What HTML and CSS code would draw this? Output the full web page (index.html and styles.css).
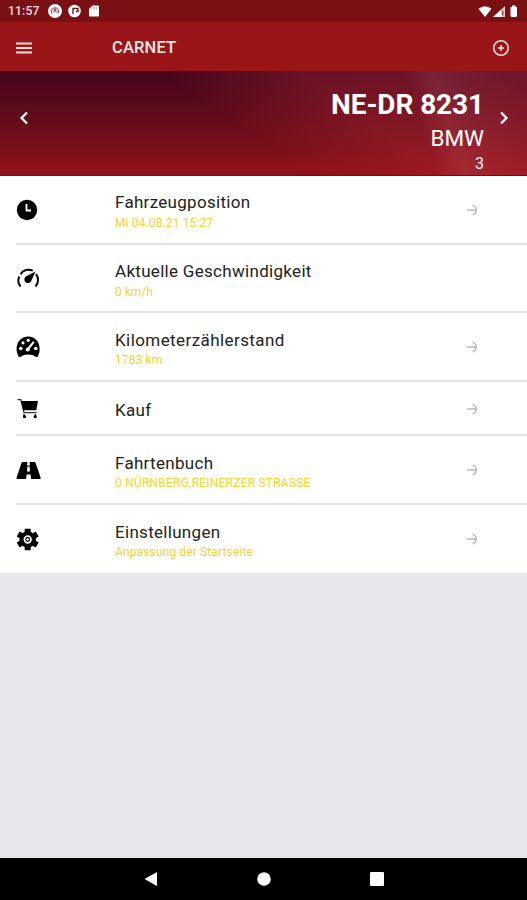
FILE: index.html
```html
<!DOCTYPE html>
<html lang="de">
<head>
<meta charset="utf-8">
<meta name="viewport" content="width=device-width">
<title>CARNET</title>
<link rel="stylesheet" href="styles.css">
</head>
<body>
<div class="status">
  <span class="time">11:57</span>
  <svg class="notices" width="54" height="16" viewBox="0 0 54 16">
    <circle cx="7" cy="8" r="7" fill="#fff"/>
    <path d="M4.200 10.500a3.500 3.500 0 1 1 5.600 0M5.600 9.500L7 5.800 8.400 9.500" fill="none" stroke="#a04a4e" stroke-width="1.100"/>
    <circle cx="26.500" cy="8" r="6.300" fill="#fff"/>
    <path d="M25 11V5.500h5v3h-2" fill="none" stroke="#7c1014" stroke-width="1.400"/>
    <path d="M41 6l3.500-3.500H50q1 0 1 1v9q0 1-1 1h-8q-1 0-1-1z" fill="#fff"/>
    <path d="M44 4v2.500M46.300 4v2.500M48.600 4v2.500" stroke="#b06a6c" stroke-width=".7"/>
  </svg>
  <svg class="signals" width="42" height="16" viewBox="0 0 42 16">
    <path d="M.5 5.800Q7 .6 13.500 5.800L7 14z" fill="#fff"/>
    <path d="M15 14L27 3v11z" fill="#e9c9ca"/>
    <path d="M15 14l8-7v7z" fill="#fff"/>
    <path d="M24.800 7.500v5" stroke="#7c1014"/>
    <path d="M32.500 4H34V2.500h3.500V4H39v9q0 1-1 1h-4.500q-1 0-1-1z" fill="#fff"/>
  </svg>
</div>
<header class="bar">
  <svg class="menu" width="16" height="12" viewBox="0 0 16 12"><path d="M0 1.500h16M0 6h16M0 10.500h16" stroke="#fbdcda" stroke-width="2"/></svg>
  <h1>CARNET</h1>
  <svg class="add" width="18" height="18" viewBox="0 0 18 18"><g fill="none" stroke="#fbdcda" stroke-width="1.600"><circle cx="9" cy="9" r="7.300"/><path d="M9 6v6M6 9h6"/></g></svg>
</header>
<section class="banner">
  <svg class="prev" width="10" height="14" viewBox="0 0 10 14"><path d="M8 1.500L2.500 7 8 12.500" fill="none" stroke="#fff" stroke-width="2.200"/></svg>
  <div class="car">
    <strong class="plate">NE-DR 8231</strong>
    <span class="make">BMW</span>
    <span class="model">3</span>
  </div>
  <svg class="next" width="10" height="14" viewBox="0 0 10 14"><path d="M2 1.500L7.500 7 2 12.500" fill="none" stroke="#fff" stroke-width="2.200"/></svg>
</section>
<main class="list">
  <div class="row">
    <svg class="icon" viewBox="0 0 26 26"><circle cx="11" cy="13" r="10.200"/><path d="M10.500 7v6.500h4.500" fill="none" stroke="#fff" stroke-width="1.800"/></svg>
    <div class="text"><span class="title up">Fahrzeugposition</span><span class="sub">Mi 04.08.21 15:27</span></div>
    <svg class="go" viewBox="0 0 12 12"><path d="M1 6h9.500M6.500 1.500H7.500Q10.300 3 10.300 6T7.500 10.500H6.500"/></svg>
  </div>
  <div class="row short">
    <svg class="icon" viewBox="0 0 26 26"><path d="M4.500 20.500A9.500 9.500 0 0 1 3.300 10.500M4.500 8.200A9.500 9.500 0 0 1 16.800 4.700M20 8.200A9.500 9.500 0 0 1 19.500 20.500" fill="none" stroke="#000" stroke-width="2"/><path d="M19.500 5.500l-4.200 9.300a3.600 3.600 0 1 1-5-4.500z"/></svg>
    <div class="text"><span class="title">Aktuelle Geschwindigkeit</span><span class="sub snug">0 km/h</span></div>
  </div>
  <div class="row">
    <svg class="icon" viewBox="0 0 26 26"><path d="M2.800 22.700C-2.500 14 2 2.500 12.200 2.500S26.500 14 21.600 22.700q-1 .8-2 0c-4-2.800-10.800-2.800-14.800 0q-1 .8-2 0z"/><g fill="#fff"><circle cx="4.800" cy="14.500" r="1.700"/><circle cx="7" cy="8.800" r="1.600"/><circle cx="12.200" cy="6.300" r="1.600"/><circle cx="19.800" cy="14.500" r="1.700"/><circle cx="11.700" cy="15.500" r="2.100"/></g><path d="M12 15L17.800 7.800" stroke="#fff" stroke-width="2"/></svg>
    <div class="text"><span class="title wide">Kilometerzählerstand</span><span class="sub">1783 km</span></div>
    <svg class="go" viewBox="0 0 12 12"><path d="M1 6h9.500M6.500 1.500H7.500Q10.300 3 10.300 6T7.500 10.500H6.500"/></svg>
  </div>
  <div class="row single">
    <svg class="icon" viewBox="0 0 26 26"><path d="M1.500 3.700h3.300l3.200 13H20.500M8 18v2M19.500 18v2" fill="none" stroke="#333" stroke-width="1.300"/><path d="M4.800 5h17.200L20.300 14.200H7.500z"/><circle cx="8.500" cy="20.700" r="1.600"/><circle cx="19.200" cy="20.700" r="1.600"/></svg>
    <div class="text"><span class="title">Kauf</span></div>
    <svg class="go" viewBox="0 0 12 12"><path d="M1 6h9.500M6.500 1.500H7.500Q10.300 3 10.300 6T7.500 10.500H6.500"/></svg>
  </div>
  <div class="row">
    <svg class="icon" viewBox="0 0 26 26"><path d="M6.800 5h4.600l-.3 3.500h2.800L13.600 5h4.600q1 0 1.400 1l5 14.500q.5 1.500-.8 1.500H15l-.4-4.500h-4l-.4 4.500H1.300Q.1 22 .6 20.500L5.500 6q.3-1 1.300-1z"/><path d="M11.400 9.500h2.200l.4 5h-3z" fill="#fff"/></svg>
    <div class="text"><span class="title">Fahrtenbuch</span><span class="sub address">0 NÜRNBERG,REINERZER STRASSE</span></div>
    <svg class="go" viewBox="0 0 12 12"><path d="M1 6h9.500M6.500 1.500H7.500Q10.300 3 10.300 6T7.500 10.500H6.500"/></svg>
  </div>
  <div class="row last">
    <svg class="icon" viewBox="0 0 26 26"><circle cx="11.700" cy="13.500" r="8.300"/><path d="M11.700 2.700v21.600M2.200 8l19 11M2.200 19l19-11" stroke="#000" stroke-width="6"/><circle cx="11.700" cy="13.500" r="3.300" fill="#000" stroke="#fff" stroke-width="1.700"/><path d="M11.700 12v3M10.200 13.500h3" stroke="#fff"/></svg>
    <div class="text"><span class="title">Einstellungen</span><span class="sub">Anpassung der Startseite</span></div>
    <svg class="go" viewBox="0 0 12 12"><path d="M1 6h9.500M6.500 1.500H7.500Q10.300 3 10.300 6T7.500 10.500H6.500"/></svg>
  </div>
</main>
<nav class="system">
  <svg width="14" height="16" viewBox="0 0 14 16"><path d="M.5 8L13 1v14z" fill="#fff"/></svg>
  <svg width="14" height="14" viewBox="0 0 14 14"><circle cx="7" cy="7" r="6.800" fill="#fff"/></svg>
  <svg width="14" height="14" viewBox="0 0 14 14"><rect width="14" height="14" rx="1" fill="#fff"/></svg>
</nav>
</body>
</html>
```
FILE: styles.css
```css
* { box-sizing: border-box; }
body {
  margin: 0;
  width: 527px;
  height: 900px;
  display: flex;
  flex-direction: column;
  overflow: hidden;
  background: #e8e7ed;
  font-family: Roboto, sans-serif;
  color: #222;
}
svg { display: block; flex: none; }
.status {
  height: 22px;
  background: #7b1014;
  display: flex;
  align-items: center;
  padding: 0 8px;
}
.time { width: 40px; font-size: 12px; line-height: 22px; font-weight: 500; color: #f6dfdf; letter-spacing: .2px; white-space: nowrap; }
.signals { margin-left: auto; margin-right: -1px; }
.bar {
  height: 49px;
  background: #9a1518;
  display: flex;
  align-items: center;
  padding: 2px 17px 0 16px;
}
.bar h1 { margin: 0 0 0 80px; font-size: 16.5px; font-weight: 500; color: #fbe6e4; letter-spacing: .15px; }
.add { margin-left: auto; }
.banner {
  height: 105px;
  display: flex;
  color: #fff;
  padding: 0 18px 0 19px;
  border-bottom: 1px solid #8a0508;
  background:
    linear-gradient(72deg, transparent 78%, rgba(255, 190, 190, .09) 83%, rgba(255, 170, 180, .05) 88%, transparent 98%),
    linear-gradient(180deg, transparent 75%, rgba(160, 20, 30, .3) 100%),
    linear-gradient(35deg, transparent 45%, rgba(200, 50, 60, .28) 66%, rgba(185, 50, 70, .36) 100%),
    linear-gradient(180deg, #43051b 0%, #5b0a19 35%, #720e19 65%, #8b1119 100%);
}
.prev, .next { margin-top: 40px; }
.car { margin-left: auto; margin-right: 15px; display: flex; flex-direction: column; align-items: flex-end; white-space: nowrap; }
.plate { margin-top: 17px; font-size: 28px; line-height: 34px; font-weight: 700; letter-spacing: -.1px; }
.make { font-size: 22.5px; line-height: 30px; margin-top: 1px; }
.model { font-size: 16px; line-height: 20px; margin-top: 1px; }
.list { background: #fff; padding-left: 16px; }
.row {
  height: 69px;
  display: flex;
  align-items: flex-start;
  border-bottom: 2px solid #e4e4e6;
}
.short { height: 68px; }
.single { height: 54px; }
.last { height: 68px; border: 0; }
.icon { width: 26px; height: 26px; margin-top: 21px; }
.single .icon { margin-top: 14px; }
.text { margin-left: 73px; padding-top: 16px; flex: 1; display: flex; flex-direction: column; white-space: nowrap; }
.short .text { padding-top: 15px; }
.single .text { padding-top: 17px; }
.title { font-size: 17px; line-height: 22px; letter-spacing: .3px; }
.up { margin: -1px 0 1px; }
.wide { letter-spacing: .42px; }
.sub { font-size: 12px; line-height: 16px; margin-top: 1px; letter-spacing: .13px; color: #fdcf2c; }
.snug { letter-spacing: 0; margin-top: 2px; }
.address { letter-spacing: .22px; }
.go { width: 12px; height: 12px; margin: 28px 49px 0 0; fill: none; stroke: #b9b9bb; stroke-width: 1.4; }
.single .go { margin-top: 21px; }
.system {
  height: 42px;
  margin-top: auto;
  background: #000;
  display: flex;
  justify-content: space-between;
  align-items: center;
  padding: 0 143px 0 144px;
}
```
